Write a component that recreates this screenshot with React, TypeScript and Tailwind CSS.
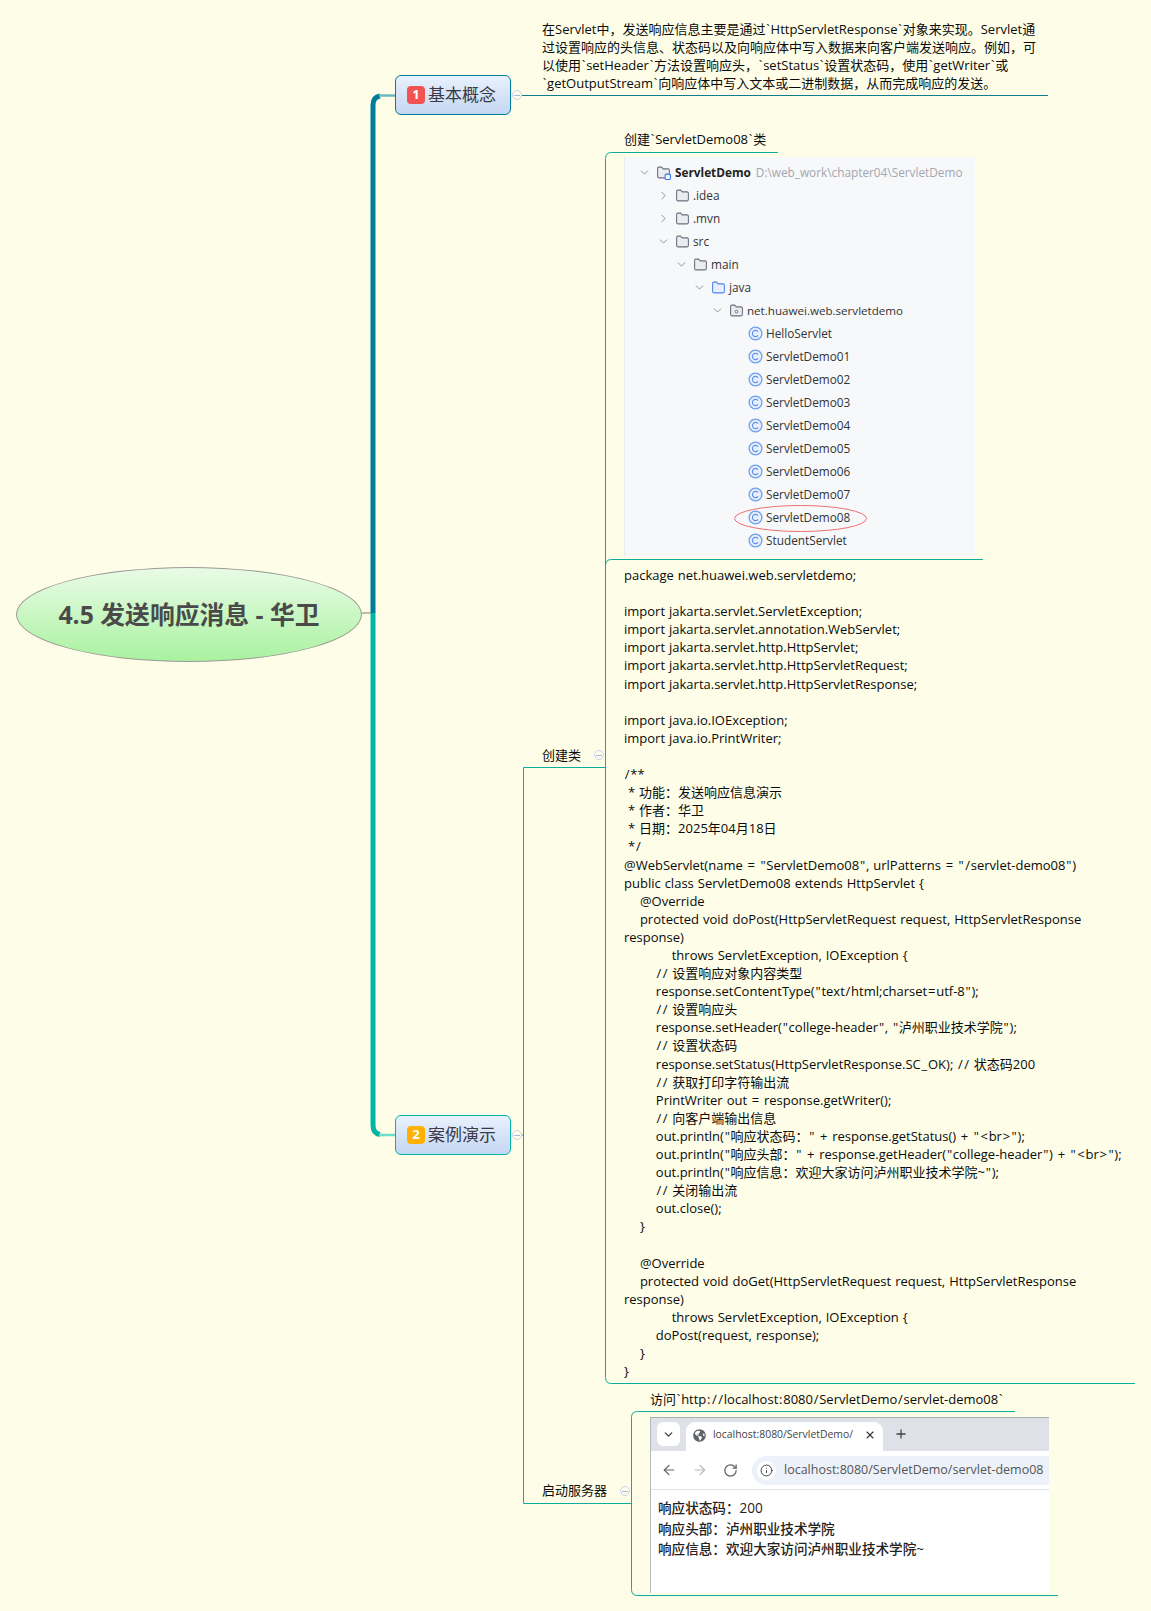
import { ArrowLeft, ArrowRight, ChevronDown, ChevronRight, Info, Plus, RotateCw, X } from "lucide-react"
import { FaGlobeAmericas } from "react-icons/fa"

const font = "font-['Open_Sans','Noto_Sans_CJK_SC',sans-serif]"

const codeLines = [
  "package net.huawei.web.servletdemo;",
  "",
  "import jakarta.servlet.ServletException;",
  "import jakarta.servlet.annotation.WebServlet;",
  "import jakarta.servlet.http.HttpServlet;",
  "import jakarta.servlet.http.HttpServletRequest;",
  "import jakarta.servlet.http.HttpServletResponse;",
  "",
  "import java.io.IOException;",
  "import java.io.PrintWriter;",
  "",
  "/**",
  " * 功能：发送响应信息演示",
  " * 作者：华卫",
  " * 日期：2025年04月18日",
  " */",
  '@WebServlet(name = "ServletDemo08", urlPatterns = "/servlet-demo08")',
  "public class ServletDemo08 extends HttpServlet {",
  "    @Override",
  "    protected void doPost(HttpServletRequest request, HttpServletResponse",
  "response)",
  "            throws ServletException, IOException {",
  "        // 设置响应对象内容类型",
  '        response.setContentType("text/html;charset=utf-8");',
  "        // 设置响应头",
  '        response.setHeader("college-header", "泸州职业技术学院");',
  "        // 设置状态码",
  "        response.setStatus(HttpServletResponse.SC_OK); // 状态码200",
  "        // 获取打印字符输出流",
  "        PrintWriter out = response.getWriter();",
  "        // 向客户端输出信息",
  '        out.println("响应状态码：" + response.getStatus() + "<br>");',
  '        out.println("响应头部：" + response.getHeader("college-header") + "<br>");',
  '        out.println("响应信息：欢迎大家访问泸州职业技术学院~");',
  "        // 关闭输出流",
  "        out.close();",
  "    }",
  "",
  "    @Override",
  "    protected void doGet(HttpServletRequest request, HttpServletResponse",
  "response)",
  "            throws ServletException, IOException {",
  "        doPost(request, response);",
  "    }",
  "}",
]

const classNames = [
  "HelloServlet",
  "ServletDemo01",
  "ServletDemo02",
  "ServletDemo03",
  "ServletDemo04",
  "ServletDemo05",
  "ServletDemo06",
  "ServletDemo07",
  "ServletDemo08",
  "StudentServlet",
]

// the reference font draws these symbols wider than Open Sans does
const Spaced = ({ text }: { text: string }) => (
  <>
    {text.split(/(["<>=+`/:_])/).map((part, i) =>
      i % 2 === 1 ? (
        <span key={i} className="px-[0.75px]">
          {part}
        </span>
      ) : (
        part
      ),
    )}
  </>
)

const FolderIcon = ({ blue, dot, badge }: { blue?: boolean; dot?: boolean; badge?: boolean }) => (
  <svg width="15" height="15" viewBox="0 0 14 14" className="shrink-0">
    <path
      d="M1.5 3.2C1.5 2.5 2 2 2.7 2H5.2L6.8 3.6H11.3C12 3.6 12.5 4.1 12.5 4.8V10.8C12.5 11.5 12 12 11.3 12H2.7C2 12 1.5 11.5 1.5 10.8Z"
      fill={blue ? "#e7effd" : "#ebecf0"}
      stroke={blue ? "#4f85ee" : "#6c707e"}
      strokeWidth="1"
    />
    {dot && <circle cx="7" cy="8" r="1.3" fill="none" stroke="#6c707e" strokeWidth="0.9" />}
    {badge && <rect x="8.5" y="8.5" width="5" height="5" rx="1" fill="#f7f8fa" stroke="#3574f0" strokeWidth="1" />}
  </svg>
)

const ClassIcon = () => (
  <svg width="15" height="15" viewBox="0 0 15 15" className="shrink-0">
    <circle cx="7.5" cy="7.5" r="6.4" fill="#e7effd" stroke="#6f9ff0" strokeWidth="1.3" />
    <path d="M10 5.6A3.1 3.1 0 1 0 10 9.4" fill="none" stroke="#5b8def" strokeWidth="1.1" />
  </svg>
)

const TreeRow = ({ indent, open, children }: { indent: string; open?: boolean; children: React.ReactNode }) => (
  <div className={`flex items-center h-[23px] ${indent}`}>
    {open === undefined ? null : open ? (
      <ChevronDown size={13} strokeWidth={1.5} className="mr-[5px] shrink-0 text-[#7b7f8a]" />
    ) : (
      <ChevronRight size={13} strokeWidth={1.5} className="mr-[5px] shrink-0 text-[#7b7f8a]" />
    )}
    {children}
  </div>
)

const ProjectTree = () => (
  <div className="absolute left-[624px] top-[157px] w-[351px] h-[400px] bg-[#f7f8fa] border-l border-[#e9eaee] pt-[4px] text-[11.8px] text-[#333] whitespace-nowrap">
    <TreeRow indent="pl-[13px]" open>
      <FolderIcon badge />
      <span className="ml-[4px] font-bold text-[#222]">ServletDemo</span>
      <span className="ml-[5px] text-[#a3a6ae]">D:\web_work\chapter04\ServletDemo</span>
    </TreeRow>
    <TreeRow indent="pl-[32px]" open={false}>
      <FolderIcon />
      <span className="ml-[3px]">.idea</span>
    </TreeRow>
    <TreeRow indent="pl-[32px]" open={false}>
      <FolderIcon />
      <span className="ml-[3px]">.mvn</span>
    </TreeRow>
    <TreeRow indent="pl-[32px]" open>
      <FolderIcon />
      <span className="ml-[3px]">src</span>
    </TreeRow>
    <TreeRow indent="pl-[50px]" open>
      <FolderIcon />
      <span className="ml-[3px]">main</span>
    </TreeRow>
    <TreeRow indent="pl-[68px]" open>
      <FolderIcon blue />
      <span className="ml-[3px]">java</span>
    </TreeRow>
    <TreeRow indent="pl-[86px]" open>
      <FolderIcon dot />
      <span className="ml-[3px] text-[11.6px]">net.huawei.web.servletdemo</span>
    </TreeRow>
    {classNames.map((name) => (
      <TreeRow key={name} indent="pl-[123px]">
        <ClassIcon />
        <span className="ml-[3px]">{name}</span>
      </TreeRow>
    ))}
  </div>
)

const BrowserShot = () => (
  <div className="absolute left-[650px] top-[1417px] w-[399px] h-[176px] bg-white border-l border-[#b4b8c0] overflow-hidden">
    <div className="flex items-end h-[34px] bg-[#dee1e8] border-t border-[#a9adb5] pl-[6px]">
      <div className="flex items-center justify-center w-[23px] h-[24px] mb-[5px] bg-white rounded-[6px]">
        <ChevronDown size={13} strokeWidth={2.2} className="text-[#333]" />
      </div>
      <div className="flex items-center w-[197px] h-[29px] ml-[6px] pl-[7px] pb-[3px] bg-white rounded-t-[9px]">
        <FaGlobeAmericas size={13} className="text-[#5f6368]" />
        <span className="ml-[7px] w-[142px] overflow-hidden whitespace-nowrap text-[10.4px] text-[#444]">
          localhost:8080/ServletDemo/
        </span>
        <X size={12} strokeWidth={2.2} className="ml-[9px] text-[#333]" />
      </div>
      <Plus size={14} strokeWidth={2.2} className="ml-[11px] mb-[10px] text-[#444]" />
    </div>
    <div className="flex items-center h-[39px] border-b border-[#dfe1e5] pl-[10px] bg-white">
      <ArrowLeft size={16} strokeWidth={1.8} className="text-[#5f6368]" />
      <ArrowRight size={16} strokeWidth={1.8} className="ml-[15px] text-[#b4b7bb]" />
      <RotateCw size={15} strokeWidth={2} className="ml-[15px] text-[#5f6368]" />
      <div className="flex items-center flex-1 h-[29px] ml-[14px] pl-[5px] bg-[#edf2fa] rounded-l-[15px]">
        <div className="flex items-center justify-center w-[19px] h-[19px] rounded-full bg-white">
          <Info size={13} strokeWidth={1.8} className="text-[#444]" />
        </div>
        <span className="ml-[8px] whitespace-nowrap text-[12.5px] text-[#555]">localhost:8080/ServletDemo/servlet-demo08</span>
      </div>
    </div>
    <div className="pl-[7px] pt-[8px] text-[13.6px] leading-[20.5px] font-medium text-[#222] whitespace-nowrap">
      <div>响应状态码：200</div>
      <div>响应头部：泸州职业技术学院</div>
      <div>响应信息：欢迎大家访问泸州职业技术学院~</div>
    </div>
  </div>
)

const Connectors = () => (
  <svg width="1151" height="1611" className="absolute left-0 top-0">
    <path d="M362 613H373" fill="none" stroke="#a3a39a" strokeWidth="1.5" />
    <path d="M373 613V105Q373 97 380 96" fill="none" stroke="#007d9c" strokeWidth="5" />
    <path d="M379 95.5H396" fill="none" stroke="#6cb9c2" strokeWidth="2.5" />
    <path d="M373 613V1125Q373 1133.5 380 1134.5" fill="none" stroke="#00b5a3" strokeWidth="5" />
    <path d="M379 1135H396" fill="none" stroke="#6edccb" strokeWidth="2.5" />

    <path d="M522 95.5H1048" fill="none" stroke="#0f7c90" strokeWidth="1" />
    <path d="M522 1135H523.5" fill="none" stroke="#10ac9b" strokeWidth="1" />
    <path d="M523.5 767.5H605.5M523.5 767.5V1503.5H631.5" fill="none" stroke="#10ac9b" strokeWidth="1" />

    <path d="M778 152.5H611.5Q605.5 152.5 605.5 158.5V1377.5Q605.5 1383.5 611.5 1383.5H1135" fill="none" stroke="#10ac9b" strokeWidth="1" />
    <path d="M983 559.5H611.5Q605.5 559.5 605.5 565.5" fill="none" stroke="#10ac9b" strokeWidth="1" />

    <path d="M1015 1411.5H637.5Q631.5 1411.5 631.5 1417.5V1589.5Q631.5 1595.5 637.5 1595.5H1058" fill="none" stroke="#10ac9b" strokeWidth="1" />

    <ellipse cx="800.5" cy="518.5" rx="66" ry="13" fill="none" stroke="#ef6f6f" strokeWidth="1" />
  </svg>
)

const Collapse = ({ className }: { className: string }) => (
  <div className={`absolute flex items-center justify-center w-[10px] h-[10px] rounded-full border border-[#c9d3f2] bg-[#fefee8] ${className}`}>
    <span className="w-[6px] h-px bg-[#aab6dc]" />
  </div>
)

const MainTopic = ({ top, border, badge, num, label }: { top: string; border: string; badge: string; num: string; label: string }) => (
  <div className={`absolute left-[395px] ${top} flex items-center w-[116px] h-[40px] pl-[11px] rounded-[6px] border bg-gradient-to-b from-[#e9f2fd] to-[#c4d6f1] ${border}`}>
    <span className={`flex items-center justify-center w-[18px] h-[18px] rounded-[4px] text-[13px] font-bold text-white ${badge}`}>{num}</span>
    <span className="ml-[3px] text-[17px] text-[#3a3a46] whitespace-nowrap">{label}</span>
  </div>
)

const Label = ({ className, children }: { className: string; children: React.ReactNode }) => (
  <div className={`absolute text-[13px] leading-[18px] whitespace-nowrap text-[#0a0a0a] ${className}`}>{children}</div>
)

export default function App() {
  return (
    <div className={`relative w-[1151px] h-[1611px] overflow-hidden bg-[#fefee8] ${font}`}>
      <ProjectTree />
      <BrowserShot />
      <Connectors />

      <div className="absolute left-[16px] top-[567px] flex items-center justify-center w-[346px] h-[95px] pt-[1px] rounded-[50%] border border-[#9a9a94] bg-gradient-to-b from-[#e9fbe6] to-[#a9f2a0]">
        <span className="text-[24.8px] font-bold text-[#4a4a4a] whitespace-nowrap">4.5 发送响应消息 - 华卫</span>
      </div>

      <MainTopic top="top-[75px]" border="border-[#007d9c]" badge="bg-[#f05350]" num="1" label="基本概念" />
      <MainTopic top="top-[1115px]" border="border-[#00b5a3]" badge="bg-[#ffb000]" num="2" label="案例演示" />
      <Collapse className="left-[512px] top-[90px]" />
      <Collapse className="left-[512px] top-[1130px]" />

      <Label className="left-[542px] top-[20px] leading-[18.1px]">
        <div><Spaced text="在Servlet中，发送响应信息主要是通过`HttpServletResponse`对象来实现。Servlet通" /></div>
        <div>过设置响应的头信息、状态码以及向响应体中写入数据来向客户端发送响应。例如，可</div>
        <div><Spaced text="以使用`setHeader`方法设置响应头，`setStatus`设置状态码，使用`getWriter`或" /></div>
        <div><Spaced text="`getOutputStream`向响应体中写入文本或二进制数据，从而完成响应的发送。" /></div>
      </Label>

      <Label className="left-[624px] top-[130px]"><Spaced text="创建`ServletDemo08`类" /></Label>
      <Label className="left-[542px] top-[746px]">创建类</Label>
      <Collapse className="left-[594px] top-[750px]" />
      <Label className="left-[542px] top-[1481px]">启动服务器</Label>
      <Collapse className="left-[620px] top-[1486px]" />
      <Label className="left-[650px] top-[1390px]"><Spaced text="访问`http://localhost:8080/ServletDemo/servlet-demo08`" /></Label>

      <div className="absolute left-[624px] top-[566px] text-[13px] leading-[18.1px] text-[#0a0a0a] whitespace-pre [word-spacing:0.6px]">
        {codeLines.map((line, i) => (
          <div key={i} className="h-[18.1px]">
            <Spaced text={line} />
          </div>
        ))}
      </div>
    </div>
  )
}
